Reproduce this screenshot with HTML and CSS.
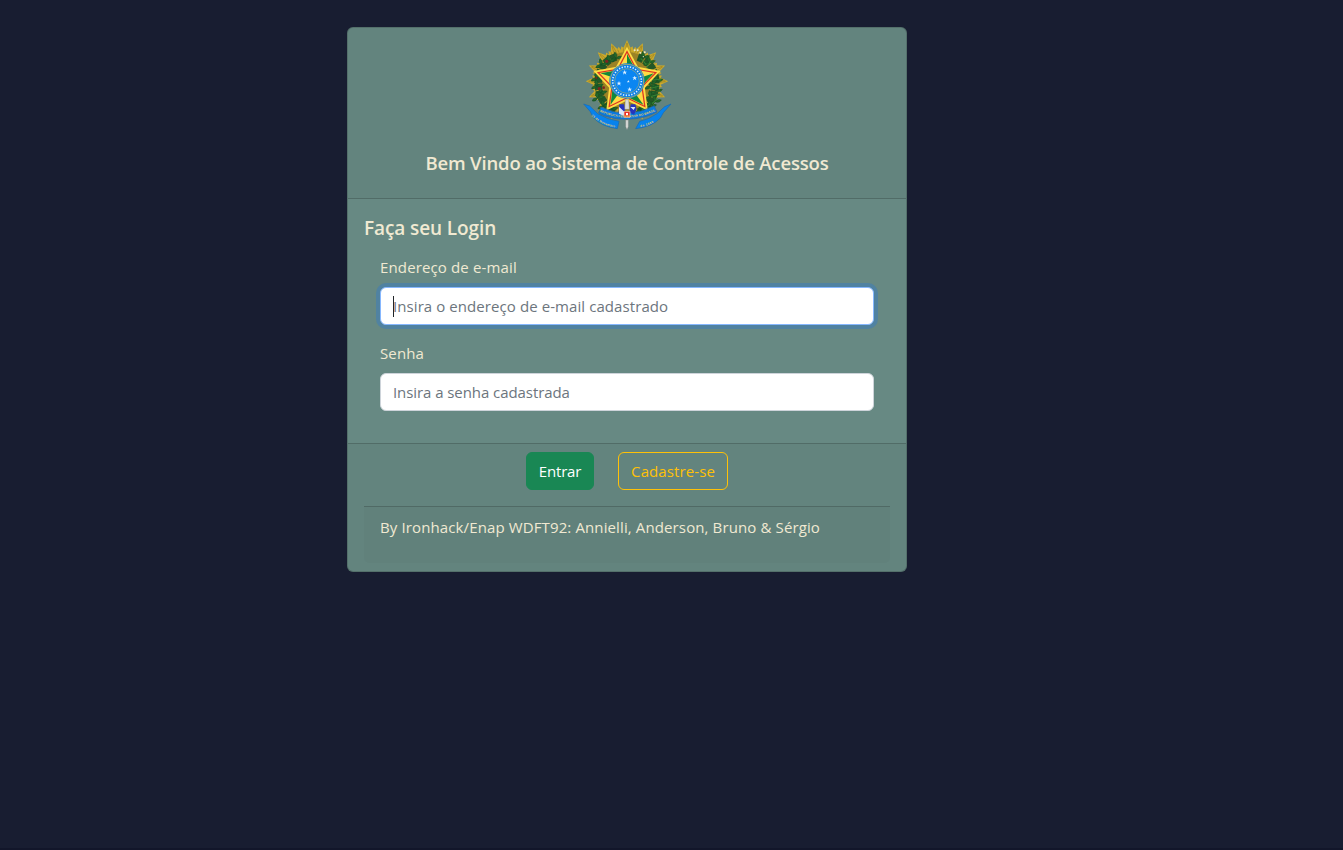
FILE: index.html
```html
<!DOCTYPE html>
<html lang="pt-BR">
<head>
<meta charset="utf-8">
<title>Sistema de Controle de Acessos</title>
<link rel="stylesheet" href="styles.css">
</head>
<body>
<main class="card">
  <header class="card-header">
    <svg class="crest" viewBox="0 0 300 300" role="img" aria-label="Brasão da República">
      <defs>
        <g id="ray"><path d="M128 66 134 36l6 4 10-22 10 22 6-4 6 30z" fill="#cbaa2c"/><path d="M139 66 140 42M145 60 149 26M155 60 151 26M161 66 160 42" fill="none" stroke="#80691e" stroke-width="1.2"/></g>
        <g id="rays5"><use href="#ray"/><use href="#ray" transform="rotate(22.5 150 136)"/><use href="#ray" transform="rotate(45 150 136)"/><use href="#ray" transform="rotate(67.5 150 136)"/></g>
        <g id="leaf"><path d="M0 0Q-10-7-3-18Q8-10 0 0M0 0Q9-9 18-5Q12 6 0 0M0 0Q-14-2-15 8Q-5 11 0 0" fill="#23672a" stroke="#164a20" stroke-width="1.5"/></g>
        <g id="arm"><path d="M150 32 186 98 150 138 114 98z" fill="#ffdc45"/><path d="M150 43 179 98 150 138 121 98z" fill="#dc3522"/><path d="M150 51 175 98 150 138 125 98z" fill="#ffdc45"/><path d="M150 54V125L173 96z" fill="#14883a"/></g>
        <path id="star" d="M0-7 2-2 7-2 3 1 5 7 0 3-5 7-3 1-7-2-2-2z" fill="#dcefff"/>
        <path id="motto" d="M68 227Q150 263 235 225"/>
        <path id="dateLeft" d="M43 239Q76 270 120 275"/>
        <path id="dateRight" d="M190 273Q224 267 245 248"/>
      </defs>
      <g transform="translate(150 136) scale(1.05) translate(-150 -136)">
        <use href="#rays5"/><use href="#rays5" transform="rotate(90 150 136)"/><use href="#rays5" transform="rotate(180 150 136)"/><use href="#rays5" transform="rotate(270 150 136)"/>
        <circle cx="150" cy="136" r="84" fill="#9b8226"/>
        <g fill="none" stroke="#245727" stroke-width="22" stroke-dasharray="17 3"><path d="M119 66Q72 80 68 135Q66 195 116 224"/><path d="M181 67Q229 83 232 137Q231 198 182 225"/></g>
        <g>
          <use href="#leaf" x="118" y="70"/><use href="#leaf" x="98" y="78"/><use href="#leaf" x="76" y="89"/><use href="#leaf" x="63" y="127"/><use href="#leaf" x="64" y="149"/><use href="#leaf" x="75" y="169"/><use href="#leaf" x="66" y="184"/><use href="#leaf" x="82" y="207"/><use href="#leaf" x="106" y="216"/>
          <use href="#leaf" x="197" y="68"/><use href="#leaf" x="213" y="82"/><use href="#leaf" x="224" y="125"/><use href="#leaf" x="235" y="135"/><use href="#leaf" x="217" y="150"/><use href="#leaf" x="233" y="164"/><use href="#leaf" x="217" y="180"/><use href="#leaf" x="230" y="194"/><use href="#leaf" x="216" y="208"/><use href="#leaf" x="191" y="217"/>
        </g>
        <g stroke="#378133" stroke-width="3" fill="none"><path d="M191 72 205 88M218 75 206 98M216 133 248 130M212 157 241 150M218 179 244 172M222 200 237 185M192 218 215 202"/></g>
      </g>
      <g fill="#7c2520"><circle cx="89" cy="76" r="5"/><circle cx="67" cy="158" r="5"/><circle cx="80" cy="155" r="4"/><circle cx="58" cy="126" r="3"/></g>
      <g fill="#eee9c8"><circle cx="173" cy="43" r="3"/><circle cx="182" cy="43" r="3"/><circle cx="190" cy="50" r="3"/><circle cx="203" cy="49" r="3"/><circle cx="199" cy="62" r="2"/></g>
      <use href="#arm"/><use href="#arm" transform="rotate(72 150 138)"/><use href="#arm" transform="rotate(144 150 138)"/><use href="#arm" transform="rotate(216 150 138)"/><use href="#arm" transform="rotate(288 150 138)"/>
      <circle cx="150" cy="135" r="53" fill="#087ee8"/><circle cx="150" cy="135" r="50" fill="none" stroke="#d8bd3d" stroke-width="2"/>
      <circle cx="150" cy="135" r="43" fill="none" stroke="#d9f0ff" stroke-width="5" stroke-dasharray="4 4.4"/><circle cx="150" cy="135" r="37" fill="#0a86f2" stroke="#d2bd55" stroke-width="1.5"/>
      <use href="#star" x="143" y="109"/><use href="#star" x="173" y="126"/><use href="#star" x="126" y="142"/><use href="#star" x="158" y="160"/><use href="#star" transform="translate(154 136) scale(.6)"/>
      <path d="M20 204 38 210 62 233Q91 251 126 256L121 278Q73 272 48 244L40 227zM282 204 263 212 240 233Q216 250 188 256L176 278Q225 273 250 246L259 230z" fill="#0783ed" stroke="#1769b4" stroke-width="2"/>
      <path d="M72 213Q150 252 232 209L240 228Q201 249 150 250Q96 250 65 231z" fill="#087ae0" stroke="#2865a1" stroke-width="2"/>
      <path d="M127 205h14l4 16-8 14-12-4zM161 205h14l4 15-8 16-14-7z" fill="#2534bd"/>
      <path d="M126 212 145 230 139 239 126 233zM160 213h15l-5 9z" fill="#d9e5f6"/>
      <path d="M145 191h10l2 29h-14zM146 252h8v20l-4 9-4-9z" fill="#d9dbd8" stroke="#777" stroke-width="1"/>
      <path d="M141 226h18v18h-18z" fill="#e92d25" stroke="#f0d4c0" stroke-width="2"/><path d="M147 231h6v7h-6z" fill="#fff"/>
      <g class="ribbon-text"><text><textPath href="#motto" textLength="173">REPUBLICA FEDERATIVA DO BRASIL</textPath></text><text><textPath href="#dateLeft" textLength="80">15 de Novembro</textPath></text><text><textPath href="#dateRight" textLength="42">de 1889</textPath></text></g>
    </svg>
    <h1 class="welcome">Bem Vindo ao Sistema de Controle de Acessos</h1>
  </header>
  <form class="card-body">
    <h2 class="login-title">Faça seu Login</h2>
    <div class="field">
      <label class="label" for="email">Endereço de e-mail</label>
      <div class="input-wrap"><input class="input input-focused" id="email" type="email" placeholder="Insira o endereço de e-mail cadastrado"><span class="caret"></span></div>
    </div>
    <div class="field">
      <label class="label" for="senha">Senha</label>
      <input class="input input-password" id="senha" type="password" placeholder="Insira a senha cadastrada">
    </div>
  </form>
  <footer class="card-footer">
    <div class="actions"><button class="button button-enter">Entrar</button><button class="button button-register">Cadastre-se</button></div>
    <div class="credits">By Ironhack/Enap WDFT92: Annielli, Anderson, Bruno &amp; Sérgio</div>
  </footer>
</main>
</body>
</html>
```
FILE: styles.css
```css
* { box-sizing: border-box; }
body {
  margin: 0;
  min-height: 850px;
  padding-top: 27px;
  background: #181d31;
  border-bottom: 2px solid #12162a;
  color: #f0e9d2;
  font: 15px/24px "Open Sans", "Noto Sans", sans-serif;
}
.card {
  width: 560px;
  height: 545px;
  margin-left: 347px;
  background: #678983;
  border: 1px solid rgba(0, 0, 0, .175);
  border-radius: 6px;
  display: flex;
  flex-direction: column;
}
.card-header {
  height: 171px;
  padding-top: 8px;
  background: rgba(0, 0, 0, .03);
  border-bottom: 1px solid rgba(0, 0, 0, .175);
  display: flex;
  flex-direction: column;
  align-items: center;
}
.crest { width: 100px; height: 100px; flex: none; }
.ribbon-text { fill: #f0cd58; font: bold 9px "Liberation Sans", sans-serif; }
.welcome, .login-title { margin: 0; font-weight: 600; line-height: 24px; }
.welcome { margin-top: 15px; font-size: 18.5px; letter-spacing: -.16px; white-space: nowrap; }
.card-body { height: 244px; padding: 17px 32px 0; }
.login-title { margin: 0 0 15px -16px; font-size: 19px; letter-spacing: -.1px; }
.field { margin-bottom: 16px; }
.label { display: block; height: 24px; margin-bottom: 8px; letter-spacing: .14px; }
.input-wrap { position: relative; }
.input {
  display: block;
  width: 494px;
  height: 38px;
  padding: 6px 12px;
  border: 1px solid #ced4da;
  border-radius: 6px;
  background: #fff;
  font: inherit;
  letter-spacing: .08px;
  outline: 0;
}
.input::placeholder { color: #6c757d; opacity: 1; }
.input-focused { border-color: #86b7fe; box-shadow: 0 0 0 4px rgba(13, 110, 253, .25); }
.input-password { letter-spacing: -.07px; }
.caret { position: absolute; left: 13px; top: 9px; width: 1px; height: 21px; background: #212529; }
.card-footer {
  flex: 1;
  padding: 8px 16px;
  background: rgba(0, 0, 0, .03);
  border-top: 1px solid rgba(0, 0, 0, .175);
}
.actions { display: flex; justify-content: center; gap: 24px; margin-bottom: 16px; }
.button { height: 38px; border: 1px solid; border-radius: 6px; padding: 0; font: inherit; }
.button-enter { width: 68px; color: #fff; background: #198754; border-color: #198754; letter-spacing: -.15px; }
.button-register { width: 110px; color: #ffc107; background: transparent; border-color: #ffc107; letter-spacing: .1px; }
.credits {
  height: 57px;
  padding: 8px 16px;
  background: rgba(0, 0, 0, .02);
  border-top: 1px solid rgba(0, 0, 0, .175);
  border-radius: 0 0 5px 5px;
  letter-spacing: .12px;
  white-space: nowrap;
}
```
